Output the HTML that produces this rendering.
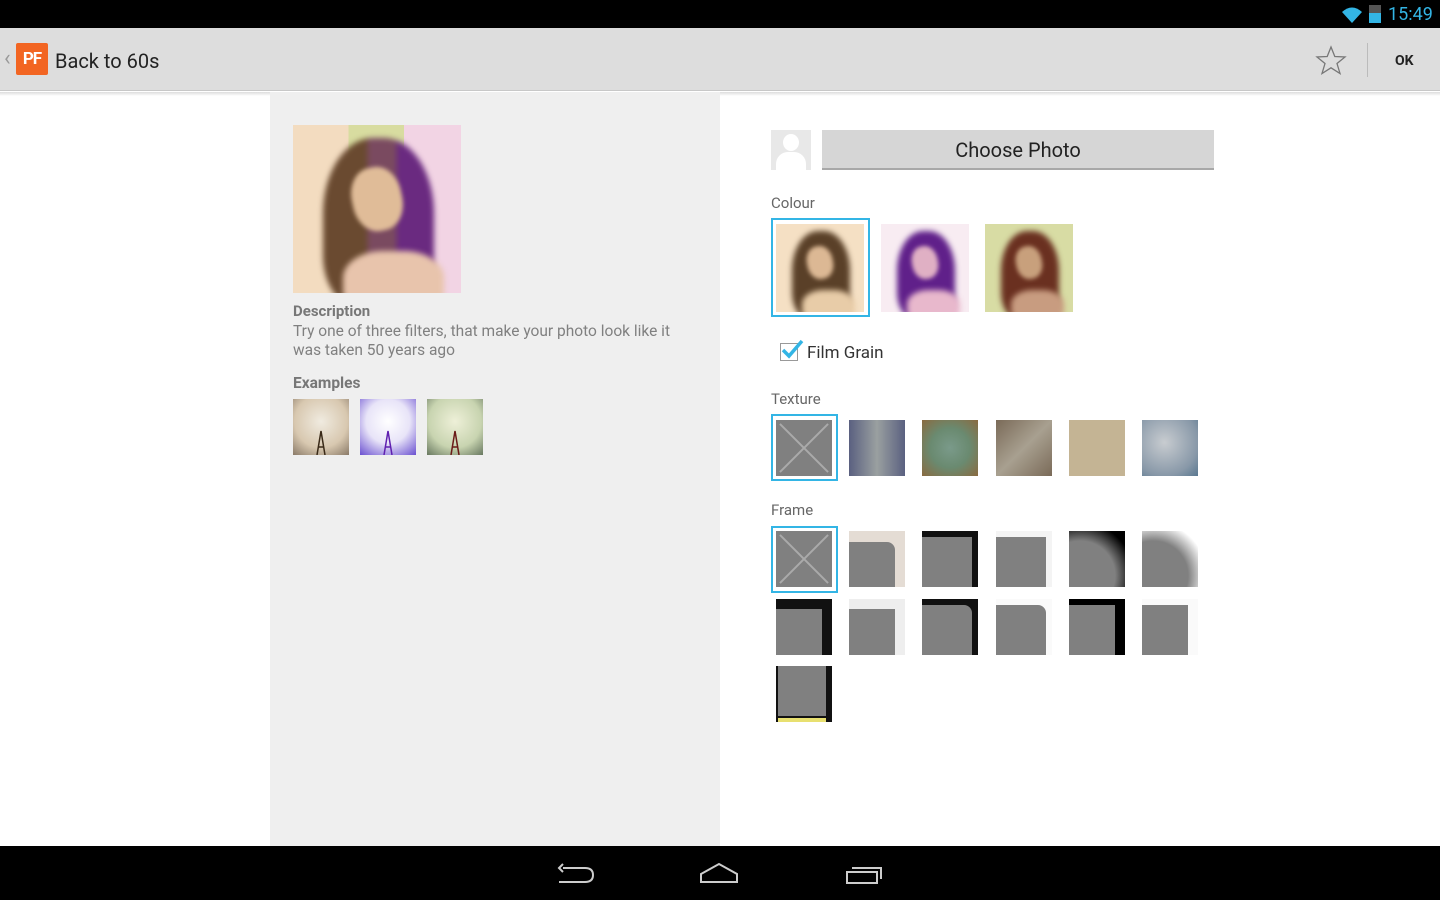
<!DOCTYPE html>
<html><head><meta charset="utf-8"><style>
*{margin:0;padding:0;box-sizing:border-box}
body{width:1440px;height:900px;position:relative;background:#fff;font-family:"Roboto","Liberation Sans",sans-serif;overflow:hidden}
.a{position:absolute}
.t{width:56px;height:56px}
.face{overflow:hidden}
.face .hair{position:absolute;left:18%;top:8%;width:66%;height:100%;border-radius:45% 45% 30% 30%;filter:blur(3px)}
.face .skin{position:absolute;left:35%;top:25%;width:30%;height:38%;border-radius:45%;transform:rotate(-12deg);filter:blur(2px)}
.face .sh{position:absolute;left:30%;top:75%;width:60%;height:40%;border-radius:40%;filter:blur(3px)}
.gray{background:#808080}
.x{background:#808080;overflow:hidden}
.x:before,.x:after{content:"";position:absolute;left:-6px;top:27px;width:68px;height:2px;background:#aaa;transform:rotate(45deg)}
.x:after{transform:rotate(-45deg)}
.sel{border:2px solid #33b5e5}
.lbl{color:#666;font-size:15px}
</style></head><body>
<div class="a" style="left:0;top:0;width:1440px;height:28px;background:#000"></div>
<svg class="a" style="left:1341px;top:6px" width="22" height="18" viewBox="0 0 22 18"><path d="M1 6 Q11 -3 21 6 L11 17Z" fill="#33b5e5"/></svg>
<div class="a" style="left:1369px;top:5px;width:12px;height:18px;background:#33b5e5"></div>
<div class="a" style="left:1369px;top:5px;width:12px;height:8px;background:#555"></div>
<div class="a" style="left:1388px;top:4px;color:#33b5e5;font-size:18px">15:49</div>
<div class="a" style="left:0;top:28px;width:1440px;height:63px;background:#dddddd;border-bottom:1px solid #c8c8c8"></div>
<div class="a" style="left:4px;top:46px;color:#999;font-size:22px">‹</div>
<div class="a" style="left:16px;top:43px;width:32px;height:32px;background:#f26522;border-radius:2px;color:#fff;font-weight:bold;font-size:17px;text-align:center;line-height:32px;letter-spacing:-1px">PF</div>
<div class="a" style="left:55px;top:49px;font-size:20px;color:#222">Back to 60s</div>
<svg class="a" style="left:1315px;top:45px" width="32" height="30" viewBox="0 0 32 30"><path d="M16 2 L19.8 11.5 L30 12 L22 18.5 L25 28.5 L16 22.8 L7 28.5 L10 18.5 L2 12 L12.2 11.5Z" fill="none" stroke="#777" stroke-width="1.3"/></svg>
<div class="a" style="left:1367px;top:43px;width:1px;height:34px;background:#bbb"></div>
<div class="a" style="left:1395px;top:53px;font-size:14px;font-weight:bold;color:#222">OK</div>
<div class="a" style="left:0;top:92px;width:1440px;height:4px;background:linear-gradient(#ddd,#fff)"></div>

<div class="a" style="left:270px;top:92px;width:450px;height:754px;background:#efefef"></div>
<div class="a face" style="left:293px;top:125px;width:168px;height:168px;background:linear-gradient(90deg,#f3dcc0 0 33%,#d8dca0 33% 66%,#f2d4e4 66%)">
<div class="hair" style="background:linear-gradient(90deg,#6a4a30 0 40%,#7a4a60 40% 66%,#6a2a80 66%)"></div>
<div class="skin" style="background:#e0bc98"></div>
<div class="sh" style="background:#e8c4ac"></div></div>
<div class="a" style="left:293px;top:302px;font-size:15px;font-weight:bold;color:#777">Description</div>
<div class="a" style="left:293px;top:322px;width:395px;font-size:15.5px;line-height:19px;color:#808080">Try one of three filters, that make your photo look like it was taken 50 years ago</div>
<div class="a" style="left:293px;top:374px;font-size:15.5px;font-weight:bold;color:#777">Examples</div>
<div class="a t" style="left:293px;top:399px;background:radial-gradient(circle at 50% 40%,#f0ebe0,#d8c8b0 60%,#8a7a68)"></div>
<div class="a t" style="left:360px;top:399px;background:radial-gradient(circle at 50% 40%,#fff,#e8e4f8 50%,#6a50d0)"></div>
<div class="a t" style="left:427px;top:399px;background:radial-gradient(circle at 50% 40%,#eef0d8,#c8d4b0 60%,#687860)"></div>
<svg class="a" style="left:293px;top:399px" width="200" height="56"><g fill="none" stroke-width="1.5"><path d="M24 56 L28 32 L32 56 M25 48 H31" stroke="#3a2a18"/><path d="M91 56 L95 32 L99 56 M92 48 H98" stroke="#6020b0"/><path d="M158 56 L162 32 L166 56 M159 48 H165" stroke="#6a1a18"/></g></svg>

<div class="a" style="left:771px;top:130px;width:40px;height:40px;background:#e8e8e8;overflow:hidden"><div class="a" style="left:12px;top:4px;width:16px;height:17px;border-radius:50%;background:#fff"></div><div class="a" style="left:5px;top:22px;width:30px;height:20px;border-radius:12px 12px 0 0;background:#fff"></div></div>
<div class="a" style="left:822px;top:130px;width:392px;height:40px;background:#d6d6d6;border-bottom:2px solid #a8a8a8;text-align:center;line-height:40px;font-size:20px;color:#222">Choose Photo</div>
<div class="a lbl" style="left:771px;top:194px">Colour</div>
<div class="a sel" style="left:771px;top:218px;width:99px;height:99px"></div>
<div class="a face" style="left:776px;top:224px;width:88px;height:88px;background:#f5e0c4"><div class="hair" style="background:#5a4028"></div><div class="skin" style="background:#dcb894"></div><div class="sh" style="background:#e8cca8"></div></div>
<div class="a face" style="left:881px;top:224px;width:88px;height:88px;background:#f8ecf2"><div class="hair" style="background:#60208a"></div><div class="skin" style="background:#e0b0c4"></div><div class="sh" style="background:#e8b8cc"></div></div>
<div class="a face" style="left:985px;top:224px;width:88px;height:88px;background:#d8dca4"><div class="hair" style="background:#6a3020"></div><div class="skin" style="background:#c8a07c"></div><div class="sh" style="background:#c89c80"></div></div>
<div class="a" style="left:780px;top:343px;width:18px;height:18px;border:1px solid #999;background:#fff"></div>
<svg class="a" style="left:780px;top:338px" width="24" height="22"><path d="M3 12 L9 18 L22 3" fill="none" stroke="#33b5e5" stroke-width="3.5"/></svg>
<div class="a" style="left:807px;top:343px;font-size:17px;color:#333">Film Grain</div>
<div class="a lbl" style="left:771px;top:390px">Texture</div>
<div class="a sel" style="left:771px;top:414px;width:67px;height:67px"></div>
<div class="a t x" style="left:776px;top:420px"></div>
<div class="a t" style="left:849px;top:420px;background:linear-gradient(90deg,#5a6080,#9aa0a0 50%,#5a6080)"></div>
<div class="a t" style="left:922px;top:420px;background:radial-gradient(#7a9a8a,#6a8a70 50%,#8a6a40)"></div>
<div class="a t" style="left:996px;top:420px;background:linear-gradient(135deg,#7a6a58,#a8a090 50%,#7a6a58)"></div>
<div class="a t" style="left:1069px;top:420px;background:#c4b494"></div>
<div class="a t" style="left:1142px;top:420px;background:radial-gradient(circle at 40% 40%,#c8ccd0,#8898a8 70%,#5a7890)"></div>
<div class="a lbl" style="left:771px;top:501px">Frame</div>
<div class="a sel" style="left:771px;top:526px;width:67px;height:67px"></div>
<div class="a t x" style="left:776px;top:531px"></div>
<div class="a t" style="left:849px;top:531px;background:#e4dcd4"><div class="a gray" style="left:0;top:11px;width:46px;height:45px;border-radius:0 8px 0 0"></div></div>
<div class="a t" style="left:922px;top:531px;background:#111"><div class="a gray" style="left:0;top:6px;width:50px;height:50px"></div></div>
<div class="a t" style="left:996px;top:531px;background:#f4f4f4"><div class="a gray" style="left:0;top:6px;width:50px;height:50px"></div></div>
<div class="a t" style="left:1069px;top:531px;background:radial-gradient(circle at 20% 80%,#808080 55%,#000 85%)"></div>
<div class="a t" style="left:1142px;top:531px;background:radial-gradient(circle at 20% 80%,#808080 55%,#fff 85%)"></div>
<div class="a t" style="left:776px;top:599px;background:#111"><div class="a gray" style="left:0;top:10px;width:46px;height:46px"></div></div>
<div class="a t" style="left:849px;top:599px;background:#eee"><div class="a gray" style="left:0;top:10px;width:46px;height:46px"></div></div>
<div class="a t" style="left:922px;top:599px;background:#111"><div class="a gray" style="left:0;top:6px;width:50px;height:50px;border-radius:0 8px 0 0"></div></div>
<div class="a t" style="left:996px;top:599px;background:#fafafa"><div class="a gray" style="left:0;top:6px;width:50px;height:50px;border-radius:0 8px 0 0"></div></div>
<div class="a t" style="left:1069px;top:599px;background:#000"><div class="a gray" style="left:0;top:6px;width:46px;height:50px"></div></div>
<div class="a t" style="left:1142px;top:599px;background:#fafafa"><div class="a gray" style="left:0;top:6px;width:46px;height:50px"></div></div>
<div class="a t" style="left:776px;top:666px;background:#111"><div class="a gray" style="left:2px;top:0;width:48px;height:50px"></div><div class="a" style="left:2px;top:52px;width:48px;height:4px;background:#e8e070"></div></div>

<div class="a" style="left:0;top:846px;width:1440px;height:54px;background:#000"></div>
<svg class="a" style="left:555px;top:860px" width="340" height="28"><g fill="none" stroke="#ccc" stroke-width="2"><path d="M8 8 H30 Q38 8 38 15 Q38 22 30 22 H4 M8 4 L4 8 L8 12"/><path d="M146 14 L164 4 L182 14 V22 H146Z"/><path d="M292 12 H322 V23 H292Z M297 8 H326 V19"/></g></svg>
</body></html>
